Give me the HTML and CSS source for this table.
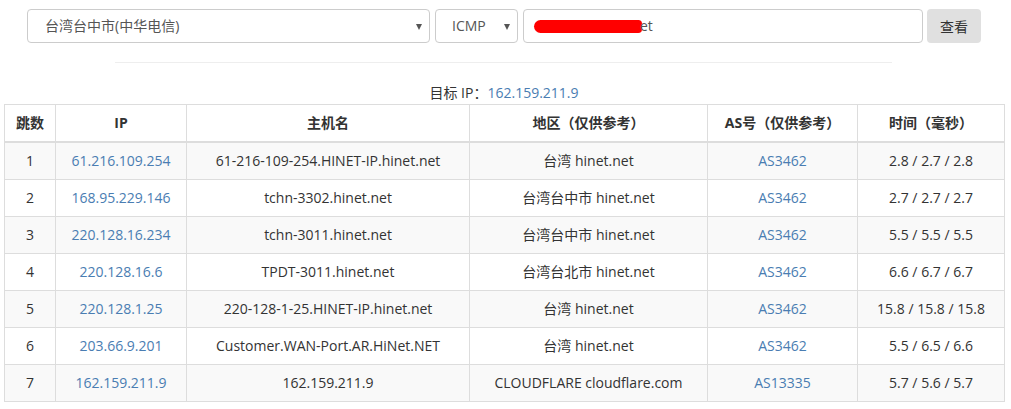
FILE: index.html
```html
<!DOCTYPE html>
<html lang="zh-CN">
<head>
<meta charset="utf-8">
<title>Traceroute</title>
<link rel="stylesheet" href="styles.css">
</head>
<body>
<div class="page">
  <div class="form-row">
    <div class="select select-node"><span>台湾台中市(中华电信)</span><span class="caret"></span></div>
    <div class="select select-proto"><span>ICMP</span><span class="caret"></span></div>
    <div class="input"><span class="redact"></span><span class="tail">et</span></div>
    <button class="btn">查看</button>
  </div>
  <div class="divider"></div>
  <div class="target">目标 IP：<a class="link">162.159.211.9</a></div>
  <table class="trace">
    <thead>
      <tr>
        <th class="c-hop">跳数</th>
        <th class="c-ip">IP</th>
        <th class="c-host">主机名</th>
        <th class="c-geo">地区（仅供参考）</th>
        <th class="c-as">AS号（仅供参考）</th>
        <th class="c-time">时间（毫秒）</th>
      </tr>
    </thead>
    <tbody>
      <tr><td>1</td><td><a class="link">61.216.109.254</a></td><td>61-216-109-254.HINET-IP.hinet.net</td><td>台湾 hinet.net</td><td><a class="link">AS3462</a></td><td>2.8 / 2.7 / 2.8</td></tr>
      <tr><td>2</td><td><a class="link">168.95.229.146</a></td><td>tchn-3302.hinet.net</td><td>台湾台中市 hinet.net</td><td><a class="link">AS3462</a></td><td>2.7 / 2.7 / 2.7</td></tr>
      <tr><td>3</td><td><a class="link">220.128.16.234</a></td><td>tchn-3011.hinet.net</td><td>台湾台中市 hinet.net</td><td><a class="link">AS3462</a></td><td>5.5 / 5.5 / 5.5</td></tr>
      <tr><td>4</td><td><a class="link">220.128.16.6</a></td><td>TPDT-3011.hinet.net</td><td>台湾台北市 hinet.net</td><td><a class="link">AS3462</a></td><td>6.6 / 6.7 / 6.7</td></tr>
      <tr><td>5</td><td><a class="link">220.128.1.25</a></td><td>220-128-1-25.HINET-IP.hinet.net</td><td>台湾 hinet.net</td><td><a class="link">AS3462</a></td><td>15.8 / 15.8 / 15.8</td></tr>
      <tr><td>6</td><td><a class="link">203.66.9.201</a></td><td>Customer.WAN-Port.AR.HiNet.NET</td><td>台湾 hinet.net</td><td><a class="link">AS3462</a></td><td>5.5 / 6.5 / 6.6</td></tr>
      <tr><td>7</td><td><a class="link">162.159.211.9</a></td><td>162.159.211.9</td><td>CLOUDFLARE cloudflare.com</td><td><a class="link">AS13335</a></td><td>5.7 / 5.6 / 5.7</td></tr>
    </tbody>
  </table>
</div>
</body>
</html>
```

FILE: styles.css
```css
* { box-sizing: border-box; }
html, body {
  margin: 0;
  padding: 0;
  background: #fff;
}
body {
  font-family: "Open Sans", "Noto Sans CJK SC", sans-serif;
  font-size: 14px;
  color: #333;
  line-height: 20px;
}
.page {
  width: 1011px;
  padding-top: 9px;
}
.form-row {
  display: flex;
  align-items: stretch;
  height: 34px;
  margin-left: 27px;
}
.select {
  display: flex;
  align-items: center;
  justify-content: space-between;
  border: 1px solid #ccc;
  border-radius: 4px;
  padding: 0 7px 0 17px;
  background: #fff;
  color: #555;
}
.select-node { width: 403px; }
.select-proto { width: 83px; margin-left: 5px; padding-left: 16px; }
.caret {
  width: 0;
  height: 0;
  border-left: 3px solid transparent;
  border-right: 3px solid transparent;
  border-top: 6px solid #555;
  margin-top: 1px;
}
.input {
  width: 400px;
  margin-left: 5px;
  border: 1px solid #ccc;
  border-radius: 4px;
  padding: 0 10px;
  display: flex;
  align-items: center;
  color: #555;
}
.redact {
  display: inline-block;
  width: 108px;
  height: 13px;
  background: #ff0000;
  border-radius: 7px 4px 4px 7px;
}
.tail {
  margin-left: -2px;
  position: relative;
}
.btn {
  width: 54px;
  margin-left: 4px;
  border: none;
  border-radius: 4px;
  background: #e0e0e0;
  color: #333;
  font-family: inherit;
  font-size: 14px;
  padding: 0;
}
.divider {
  margin: 19px 0 0 115px;
  width: 777px;
  border-top: 1px solid #eee;
}
.target {
  text-align: center;
  margin-top: 20px;
  width: 1008px;
  line-height: 20px;
}
.link {
  color: #4a7db2;
  text-decoration: none;
}
.trace {
  margin: 1px 0 0 4px;
  width: 1000px;
  border-collapse: collapse;
  table-layout: fixed;
  border: 1px solid #ddd;
}
.trace th, .trace td {
  border: 1px solid #ddd;
  padding: 8px;
  text-align: center;
  line-height: 20px;
  white-space: nowrap;
}
.trace th {
  font-weight: bold;
  border-bottom-width: 2px;
}
.trace tbody tr:nth-child(odd) { background: #f9f9f9; }
.c-hop { width: 51px; }
.c-ip { width: 131px; }
.c-host { width: 283px; }
.c-geo { width: 238px; }
.c-as { width: 150px; }
.c-time { width: 147px; }
```
